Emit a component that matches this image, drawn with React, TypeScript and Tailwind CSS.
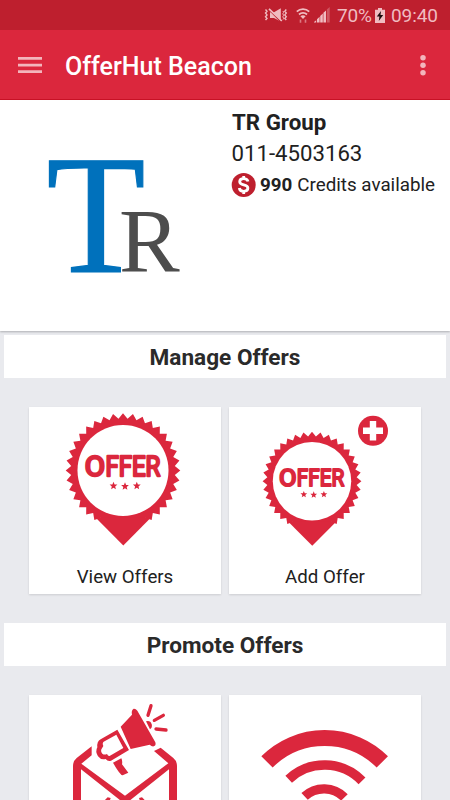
import React from 'react';

function StatusBar() {
  return (
    <div className="flex h-[30px] items-center justify-end bg-[#be1f2e] pr-[12px] text-[#f0bcc1]">
      <svg width="24" height="16" viewBox="0 0 24 16" fill="none" stroke="currentColor" strokeWidth="1.4">
        <path d="M1.5 2.5l1.5 1.7-1.5 1.8 1.5 1.9-1.5 1.8 1.5 1.7-1.5 1.6M22.3 2.5l-1.5 1.7 1.5 1.8-1.5 1.9 1.5 1.8-1.5 1.7 1.5 1.6" />
        <path d="M19 4l.6 1.3-.8 1.5.8 1.5-.8 1.5.8 1.5-.6 1.2" strokeWidth="1" />
        <path d="M6 5.2h4l6.8-4v13.4L10 11H6z" fill="currentColor" stroke="none" />
        <path d="M5.5 3L17 14.8" stroke="#be1f2e" strokeWidth="1.6" />
        <path d="M5 1.8L17.8 14" strokeWidth="1.7" />
      </svg>
      <svg className="ml-[8px]" width="14" height="17" viewBox="0 0 14 17" fill="none" stroke="currentColor" strokeWidth="1.8">
        <path d="M.8 4.7a9 9 0 0 1 12.4 0M3 7.5a5.8 5.8 0 0 1 8 0" />
        <path d="M4.4 9.3a4 4 0 0 1 5.2 0L7 12z" fill="currentColor" stroke="none" />
        <path d="M4.5 12.5v3.2M9.5 12.5v3.2" stroke="#dc7a83" strokeWidth="1.6" />
      </svg>
      <svg className="mr-px ml-[4px]" width="16" height="16" viewBox="0 0 16 16" fill="currentColor">
        <path d="M0 15.5h2.2v-2.2L0 15zM3 15.5h2.6V9.8L3 12.2zM6.2 15.5h2.6V6.6L6.2 9zM9.4 15.5h2.6V3.4L9.4 5.8z" />
        <path d="M12.8 15.5h2.9V0l-2.9 2.6z" opacity=".35" />
      </svg>
      <span className="ml-[6px] mt-[2px] w-[35px] text-[19px] tracking-[-0.2px]">70%</span>
      <svg className="ml-[3px]" width="10" height="15" viewBox="0 0 10 15">
        <path d="M3 0h4v1.7h3V15H0V1.7h3z" fill="currentColor" />
        <path d="M6 3L1.8 8.6h2.6L3.8 13 8.2 7H5.5z" fill="#1c0b0d" />
      </svg>
      <span className="ml-[6px] mt-[2px] w-[47px] text-[19px] tracking-[-0.1px]">09:40</span>
    </div>
  );
}

function Toolbar() {
  return (
    <div className="flex h-[70px] items-center border-b border-[#cb1226] bg-[#db273d] pr-[24.5px] pl-[18px]">
      <svg width="24" height="18" viewBox="0 0 24 18" fill="#f3b5bc">
        <path d="M0 1h24v2.7H0zM0 7.7h24v2.7H0zM0 14.3h24V17H0z" />
      </svg>
      <h1 className="ml-[23px] mt-[4px] flex-1 text-[25px] font-medium whitespace-nowrap text-white">OfferHut Beacon</h1>
      <svg width="6" height="22" viewBox="0 0 6 22" fill="#f3b5bc">
        <circle cx="3" cy="3.7" r="2.75" />
        <circle cx="3" cy="11.2" r="2.75" />
        <circle cx="3" cy="18.7" r="2.75" />
      </svg>
    </div>
  );
}

function Profile() {
  return (
    <div className="flex h-[231px] bg-white shadow-[0_1px_2px_rgba(0,0,0,0.25)]">
      <svg className="w-[231px] shrink-0" height="231" viewBox="0 100 231 231" fontFamily="'Liberation Serif', serif">
        <text x="46.5" y="271.5" fontSize="169" fill="#0071bc" stroke="#0071bc" strokeWidth="1.2" textLength="99" lengthAdjust="spacingAndGlyphs">T</text>
        <text x="119" y="272" fontSize="91" fill="#4d4d4d">R</text>
      </svg>
      <div className="flex flex-col pt-[7px] text-[#212121]">
        <div className="pl-px text-[22.3px] leading-[30px] font-bold">TR Group</div>
        <div className="mt-px pl-[0.5px] text-[22.2px] leading-[30px]">011-4503163</div>
        <div className="mt-[2px] flex items-center text-[18.8px] leading-[30px] whitespace-nowrap">
          <svg className="mr-[5px]" width="25" height="25" viewBox="0 0 25 25" fill="none">
            <circle cx="12.7" cy="12" r="12" fill="#be1f2e" />
            <path d="M17 8.5C16.5 6.6 14.7 5.7 12.7 5.7c-2.3 0-4 1.1-4 3 0 4.3 8.2 2.1 8.2 6.4 0 2-1.8 3.2-4.1 3.2-2.4 0-4.2-1.1-4.5-3.3M12.7 3v3M12.7 18v3" stroke="#fff" strokeWidth="2.8" />
          </svg>
          <span className="-ml-px font-bold">990</span>
          <span className="ml-[5px]">Credits available</span>
        </div>
      </div>
    </div>
  );
}

function SectionTitle({ children }: { children: React.ReactNode }) {
  return (
    <h2 className="mx-1 h-[43px] bg-white pt-[1px] text-center text-[22.6px] leading-[43px] font-bold text-[#2a2a2a]">
      {children}
    </h2>
  );
}

function Card({ label, children }: { label?: string; children: React.ReactNode }) {
  return (
    <div className="flex h-[187px] w-[192px] flex-col bg-white shadow-[0_1px_2px_rgba(0,0,0,0.12)]">
      {children}
      {label && <div className="text-center text-[18.7px] leading-[24px] text-[#212121]">{label}</div>}
    </div>
  );
}

// 36 teeth around the origin
const teeth = Array.from({ length: 72 }, (_, i) => {
  const r = i % 2 === 0 ? 57.3 : 52;
  const a = (i * Math.PI) / 36 - Math.PI / 2;
  return `${(r * Math.cos(a)).toFixed(2)},${(r * Math.sin(a)).toFixed(2)}`;
}).join(' ');

const star = 'M0-4L1.1-1.3 3.9-1.2 1.7.7 2.4 3.4 0 1.9-2.4 3.4-1.7.7-3.9-1.2-1.1-1.3z';

function OfferBadge() {
  return (
    <g fill="#db273d">
      <polygon points={teeth} />
      <path d="M-27.5 47L.3 75 28 47z" />
      <circle r="45.5" fill="#fff" />
      <text
        x="-38.2"
        y="5.2"
        fontSize="28"
        fontWeight="400"
        fontFamily="Roboto, sans-serif"
        stroke="#db273d"
        strokeWidth="2.4"
        strokeLinejoin="round"
      >
        <tspan textLength="20.3" lengthAdjust="spacingAndGlyphs">O</tspan>
        <tspan x="-17.6" textLength="55" lengthAdjust="spacingAndGlyphs">FFER</tspan>
      </text>
      <path d={star} transform="translate(-9.5 15.3)" />
      <path d={star} transform="translate(2 15.8)" />
      <path d={star} transform="translate(13.8 15.3)" />
    </g>
  );
}

export default function App() {
  return (
    <div className="h-[800px] w-[450px] overflow-hidden bg-[#e9eaee] font-['Roboto',sans-serif]">
      <StatusBar />
      <Toolbar />
      <Profile />

      <div className="mt-1">
        <SectionTitle>Manage Offers</SectionTitle>
      </div>
      <div className="mt-[29px] flex gap-2 pl-[29px]">
        <Card label="View Offers">
          <svg width="192" height="158" viewBox="29 407 192 158">
            <g transform="translate(123 470.5)">
              <OfferBadge />
            </g>
          </svg>
        </Card>
        <Card label="Add Offer">
          <svg width="192" height="158" viewBox="229 407 192 158">
            <g transform="translate(312 481.2) scale(.862)">
              <OfferBadge />
            </g>
            <circle cx="373" cy="430.8" r="15" fill="#db273d" />
            <path d="M363 430.8h20M373 421v19.5" stroke="#fff" strokeWidth="6.4" />
          </svg>
        </Card>
      </div>

      <div className="mt-[29px]">
        <SectionTitle>Promote Offers</SectionTitle>
      </div>
      <div className="mt-[29px] flex gap-2 pl-[29px]">
        <Card>
          <svg width="192" height="105" viewBox="27 45 576 315" fill="#db273d">
            <path d="M215 199L170 234Q159 243 159 258V365H183V268L306 365H325L447 268V365H471V258Q471 243 460 234L422 203 402 213 445 250 315 347 184 251 215 226z" />
            <path d="M253 362L263 352 272 354 268 366zM376 362L366 352 357 354 361 366z" />
            <path d="M302 140L336 104Q333 90 341 86 347 85 352 92L406 187Q409 197 401 199 395 200 389 194L332 207z" />
            <path
              fillRule="evenodd"
              d="M292 149L327 210 273 242Q263 245 257 237 243 241 234 229 225 214 232 202 230 184 242 178zM289 164L251 185Q246 189 250 198L246 205Q240 213 247 221 253 226 261 222 265 230 270 227L310 204z"
            />
            <path d="M279 248L304 235Q308 243 306 253L325 278 308 286Q300 285 279 248z" />
            <path d="M378 124Q391 120 395 133 398 143 390 148z" />
            <path d="M384 106L393 77M403 121L430 106M408 147L438 150" stroke="#db273d" strokeWidth="10" strokeLinecap="round" />
          </svg>
        </Card>
        <Card>
          <svg width="192" height="105" viewBox="229 695 192 105" fill="none" stroke="#db273d">
            <path d="M267 761.9a81.5 81.5 0 0 1 115.3 0" strokeWidth="16" />
            <path d="M288.7 779.2a52.3 52.3 0 0 1 73.3 1.7" strokeWidth="9.6" />
            <path d="M304.6 796.4a28.5 28.5 0 0 1 39.8 1" strokeWidth="9.3" />
          </svg>
        </Card>
      </div>
    </div>
  );
}
